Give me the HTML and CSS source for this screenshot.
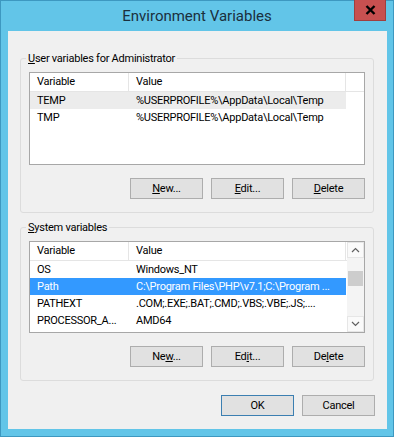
FILE: index.html
```html
<!DOCTYPE html>
<html lang="en">

<head>
    <meta charset="UTF-8">
    <meta name="viewport" content="width=device-width, initial-scale=1.0">
    <title>Environment Variables</title>
    <link rel="stylesheet" href="styles.css">
</head>

<body>
    <div class="window">
        <!-- Barra de titulo -->
        <div class="titlebar">
            <span class="title">Environment Variables</span>
            <button class="close-btn" title="Close">
                <svg width="11" height="10" viewBox="0 0 11 10"><path d="M1.5 1 L9.5 9 M9.5 1 L1.5 9" stroke="#000" stroke-width="2.4" fill="none"/></svg>
            </button>
        </div>

        <div class="client">
            <!-- Variables de usuario -->
            <fieldset class="group">
                <legend><u>U</u>ser variables for Administrator</legend>
                <div class="list">
                    <div class="list-body">
                        <div class="row head">
                            <span class="cell c1">Variable</span>
                            <span class="cell c2">Value</span>
                        </div>
                        <div class="row inactive">
                            <span class="cell c1">TEMP</span>
                            <span class="cell c2">%USERPROFILE%\AppData\Local\Temp</span>
                        </div>
                        <div class="row">
                            <span class="cell c1">TMP</span>
                            <span class="cell c2">%USERPROFILE%\AppData\Local\Temp</span>
                        </div>
                    </div>
                </div>
                <div class="buttons">
                    <button class="btn"><u>N</u>ew...</button>
                    <button class="btn"><u>E</u>dit...</button>
                    <button class="btn"><u>D</u>elete</button>
                </div>
            </fieldset>

            <!-- Variables del sistema -->
            <fieldset class="group group-system">
                <legend><u>S</u>ystem variables</legend>
                <div class="list">
                    <div class="list-body">
                        <div class="row head">
                            <span class="cell c1">Variable</span>
                            <span class="cell c2">Value</span>
                        </div>
                        <div class="row">
                            <span class="cell c1">OS</span>
                            <span class="cell c2">Windows_NT</span>
                        </div>
                        <div class="row selected">
                            <span class="cell c1">Path</span>
                            <span class="cell c2">C:\Program Files\PHP\v7.1;C:\Program ...</span>
                        </div>
                        <div class="row">
                            <span class="cell c1">PATHEXT</span>
                            <span class="cell c2">.COM;.EXE;.BAT;.CMD;.VBS;.VBE;.JS;....</span>
                        </div>
                        <div class="row">
                            <span class="cell c1">PROCESSOR_A...</span>
                            <span class="cell c2">AMD64</span>
                        </div>
                    </div>
                    <div class="scrollbar">
                        <div class="arrow">
                            <svg width="9" height="6" viewBox="0 0 9 6"><path d="M1 5 L4.5 1.5 L8 5" stroke="#606060" stroke-width="1.2" fill="none"/></svg>
                        </div>
                        <div class="track">
                            <div class="thumb"></div>
                        </div>
                        <div class="arrow">
                            <svg width="9" height="6" viewBox="0 0 9 6"><path d="M1 1 L4.5 4.5 L8 1" stroke="#606060" stroke-width="1.2" fill="none"/></svg>
                        </div>
                    </div>
                </div>
                <div class="buttons">
                    <button class="btn">Ne<u>w</u>...</button>
                    <button class="btn">Ed<u>i</u>t...</button>
                    <button class="btn">De<u>l</u>ete</button>
                </div>
            </fieldset>

            <!-- Botones del dialogo -->
            <div class="dialog-buttons">
                <button class="btn default">OK</button>
                <button class="btn">Cancel</button>
            </div>
        </div>
    </div>
</body>

</html>
```

FILE: styles.css
```css
body {
    margin: 0;
    padding: 0;
    font-family: 'Roboto', 'Noto Sans', sans-serif;
    font-size: 11px;
    letter-spacing: -0.25px;
    color: #000;
}

.window {
    width: 394px;
    height: 437px;
    box-sizing: border-box;
    background-color: #62c5e8;
    box-shadow: inset 0 0 0 1px #3d98c0;
    display: flex;
    flex-direction: column;
}

/* Barra de titulo */
.titlebar {
    height: 31px;
    display: grid;
    grid-template-columns: 1fr auto 1fr;
    align-items: start;
}

.title {
    grid-column: 2;
    font-size: 15px;
    letter-spacing: 0;
    line-height: 32px;
    color: #1b2f3d;
}

.close-btn {
    grid-column: 3;
    justify-self: end;
    width: 32px;
    height: 21px;
    margin-right: 8px;
    padding: 0;
    border: 1px solid #a13e3e;
    border-top: none;
    background-color: #c75050;
    display: flex;
    align-items: center;
    justify-content: center;
}

.client {
    flex: 1;
    margin: 0 7px 8px 8px;
    background-color: #f0f0f0;
    display: flex;
    flex-direction: column;
}

/* Grupos */
.group {
    margin: 20px 13px 0 12px;
    padding: 6px 8px 13px 8px;
    border: 1px solid #dcdcdc;
    border-radius: 3px;
}

.group-system {
    margin-top: 7px;
}

.group legend {
    margin-left: -3px;
    padding: 0 2px;
    line-height: 15px;
}

/* Listas */
.list {
    height: 93px;
    box-sizing: border-box;
    border: 1px solid #a7a7a7;
    background-color: #fff;
    display: flex;
    overflow: hidden;
}

.group-system .list {
    height: 92px;
}

.list-body {
    flex: 1;
    overflow: hidden;
}

.row {
    display: flex;
    height: 17px;
    line-height: 17px;
    white-space: nowrap;
}

.row.head {
    height: 18px;
    border-bottom: 1px solid #e5e5e5;
}

.row.head .cell {
    border-right: 1px solid #e5e5e5;
    line-height: 18px;
}

.cell {
    overflow: hidden;
    box-sizing: border-box;
}

.c1 {
    width: 99px;
    padding-left: 7px;
}

.c2 {
    width: 217px;
    padding-left: 7px;
}

.row.inactive .cell {
    background-color: #ececec;
}

.row.selected .cell {
    background-color: #3399ff;
    color: #fff;
}

/* Barra de desplazamiento */
.scrollbar {
    width: 17px;
    background-color: #f4f4f4;
    display: flex;
    flex-direction: column;
}

.arrow {
    height: 16px;
    display: flex;
    align-items: center;
    justify-content: center;
    border: 1px solid #e6e6e6;
    box-sizing: border-box;
    background-color: #fafafa;
}

.track {
    flex: 1;
    padding-top: 13px;
}

.thumb {
    height: 15px;
    margin: 0 1px;
    background-color: #cdcdcd;
}

/* Botones */
.buttons,
.dialog-buttons {
    display: flex;
    justify-content: flex-end;
    gap: 8px;
}

.buttons {
    margin-top: 13px;
}

.dialog-buttons {
    margin-top: 14px;
    padding-right: 12px;
}

.btn {
    width: 73px;
    height: 21px;
    padding: 0;
    border: 1px solid #adadad;
    background-color: #e1e1e1;
    font-family: inherit;
    font-size: 11px;
    letter-spacing: -0.25px;
    color: #000;
}

.btn.default {
    border-color: #3c7fb1;
}
```
